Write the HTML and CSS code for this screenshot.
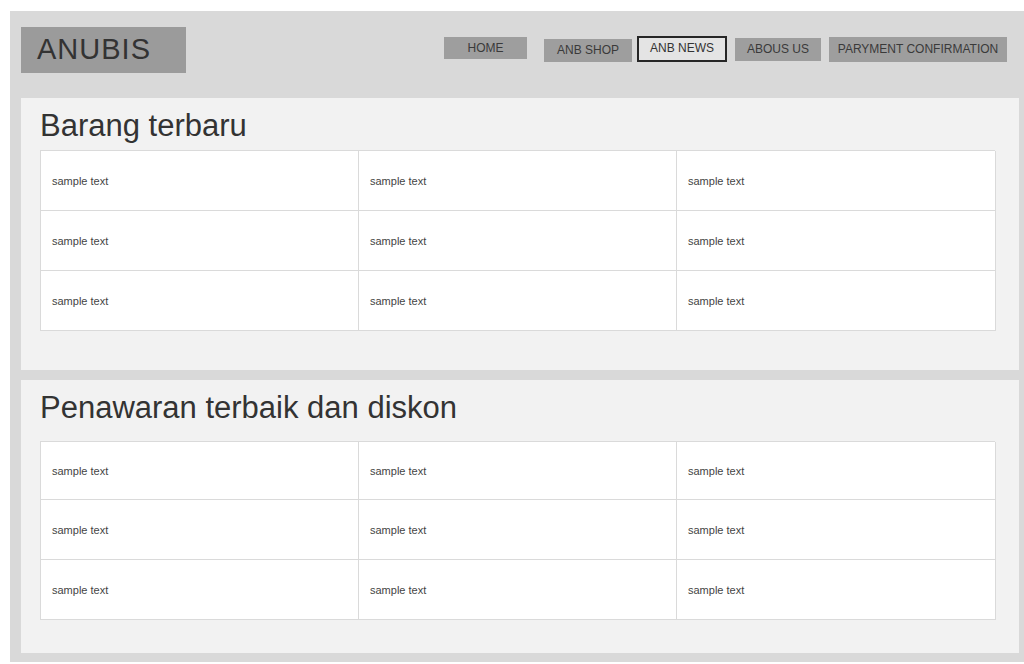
FILE: index.html
```html
<!DOCTYPE html>
<html lang="id">
<head>
<meta charset="utf-8">
<title>ANUBIS</title>
<link rel="stylesheet" href="styles.css">
</head>
<body>
<div class="site">
  <header class="topbar">
    <div class="logo">ANUBIS</div>
    <nav class="menu">
      <a class="menu-item menu-home" href="#">HOME</a>
      <a class="menu-item menu-shop" href="#">ANB SHOP</a>
      <a class="menu-item menu-news is-active" href="#">ANB NEWS</a>
      <a class="menu-item menu-about" href="#">ABOUS US</a>
      <a class="menu-item menu-pay" href="#">PARYMENT CONFIRMATION</a>
    </nav>
  </header>

  <section class="panel panel-new">
    <h2 class="panel-title">Barang terbaru</h2>
    <div class="grid">
      <div class="cell">sample text</div>
      <div class="cell">sample text</div>
      <div class="cell">sample text</div>
      <div class="cell">sample text</div>
      <div class="cell">sample text</div>
      <div class="cell">sample text</div>
      <div class="cell">sample text</div>
      <div class="cell">sample text</div>
      <div class="cell">sample text</div>
    </div>
  </section>

  <section class="panel panel-deals">
    <h2 class="panel-title">Penawaran terbaik dan diskon</h2>
    <div class="grid">
      <div class="cell cell-first">sample text</div>
      <div class="cell cell-first">sample text</div>
      <div class="cell cell-first">sample text</div>
      <div class="cell">sample text</div>
      <div class="cell">sample text</div>
      <div class="cell">sample text</div>
      <div class="cell">sample text</div>
      <div class="cell">sample text</div>
      <div class="cell">sample text</div>
    </div>
  </section>
</div>
</body>
</html>
```

FILE: styles.css
```css
* {
  box-sizing: border-box;
}

html,
body {
  margin: 0;
  padding: 0;
  background: #ffffff;
}

body {
  font-family: "Liberation Sans", Arial, sans-serif;
  color: #333333;
}

/* outer grey frame */
.site {
  margin: 11px 0 0 10px;
  height: 651px;
  background: #d9d9d9;
  padding: 0 5px 9px 11px;
  display: flex;
  flex-direction: column;
  gap: 10px;
}

/* header: logo block and menu */
.topbar {
  height: 87px;
  display: flex;
  align-items: flex-start;
  padding-right: 12px;
  margin-bottom: -10px;
}

.logo {
  margin-top: 16px;
  width: 165px;
  height: 46px;
  background: #9b9b9b;
  padding-left: 16px;
  font-size: 29px;
  line-height: 44px;
  letter-spacing: 1px;
  color: #333333;
}

.menu {
  margin-left: auto;
  margin-top: 25px;
  height: 26px;
  display: flex;
  align-items: center;
  gap: 8px;
}

.menu-item {
  height: 23px;
  display: flex;
  align-items: center;
  justify-content: center;
  background: #9e9e9e;
  color: #3a3a3a;
  font-size: 12px;
  text-decoration: none;
  padding-bottom: 1px;
}

.menu-home {
  width: 83px;
  margin-right: 9px;
  margin-top: -2px;
  height: 22px;
}

.menu-shop {
  width: 88px;
  margin-top: 2px;
  margin-right: -3px;
}

.menu-news {
  width: 90px;
  height: 26px;
}

.menu-about {
  width: 86px;
  margin-top: 1px;
}

.menu-pay {
  width: 178px;
  height: 25px;
}

.menu-item.is-active {
  background: #e4e4e4;
  border: 2px solid #262626;
  color: #333333;
  padding-bottom: 3px;
}

/* content panels */
.panel {
  background: #f2f2f2;
  padding: 10px 24px 0 19px;
}

.panel-new {
  height: 272px;
}

.panel-deals {
  height: 273px;
}

.panel-title {
  margin: 0 0 6px;
  font-size: 31px;
  line-height: 36px;
  font-weight: normal;
  color: #333333;
}

.panel-deals .panel-title {
  margin-bottom: 15px;
}

/* 3 x 3 item grid */
.grid {
  display: grid;
  grid-template-columns: 318px 318px 319px;
  border-top: 1px solid #dadada;
  border-left: 1px solid #dadada;
  background: #ffffff;
}

.cell {
  height: 60px;
  display: flex;
  align-items: center;
  padding-left: 11px;
  border-right: 1px solid #dadada;
  border-bottom: 1px solid #dadada;
  font-size: 11px;
  color: #444444;
}

.cell-first {
  height: 58px;
}
```
